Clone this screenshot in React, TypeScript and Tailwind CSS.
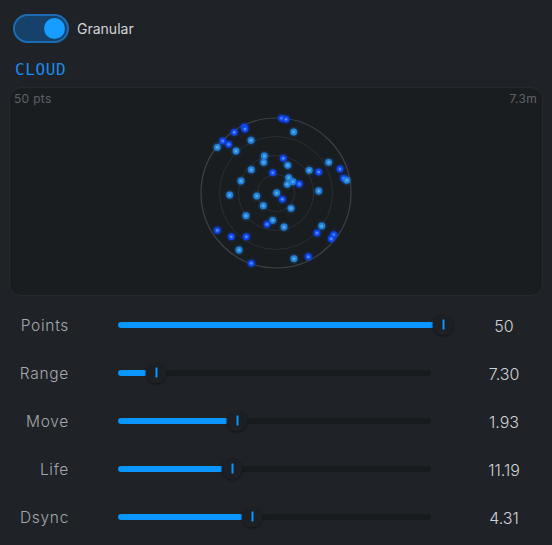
import React from "react";

type Dot = [number, number, 0 | 1];

const DOTS: Dot[] = [
  [280.7, 117.3, 0], [285, 118.3, 0], [243.3, 126, 0], [244, 128, 0], [233.3, 131.3, 0],
  [292.7, 131, 1], [221.7, 140, 0], [227.7, 143.3, 0], [216.3, 146.3, 1], [250, 139.3, 1],
  [235, 150, 1], [263.3, 155, 1], [262.7, 161.3, 1], [282.3, 157.3, 0], [286.7, 164.3, 1],
  [250.3, 168.7, 1], [271.7, 171.7, 0], [308.3, 169.3, 1], [317.7, 171, 0], [327.7, 161.3, 1],
  [339, 168, 0], [342.7, 177.3, 0], [345.7, 179.3, 1], [240, 180, 1], [287.7, 176.7, 1],
  [292, 180.7, 1], [286.3, 183.3, 1], [298.3, 183, 0], [317.7, 190, 1], [228.7, 194, 1],
  [275.7, 192, 1], [255.7, 195, 1], [281.3, 198.3, 0], [262.3, 204.7, 1], [290, 207.3, 1],
  [245, 214.7, 1], [271.7, 219.3, 1], [266, 223.3, 0], [283, 226, 1], [320.7, 225, 1],
  [316, 232, 0], [332.7, 233.7, 0], [330.3, 237.7, 0], [216.3, 229.3, 0], [230.3, 235.7, 0],
  [245.3, 235.7, 0], [238, 249, 1], [250.3, 262.3, 0], [293, 257.7, 1], [307.3, 255.7, 0],
];

const SLIDERS = [
  { label: "Points", thumb: 443, value: "50" },
  { label: "Range", thumb: 156, value: "7.30" },
  { label: "Move", thumb: 237, value: "1.93" },
  { label: "Life", thumb: 232, value: "11.19" },
  { label: "Dsync", thumb: 252, value: "4.31" },
];

const TRACK_LEFT = 118;

function Slider({ thumb }: { thumb: number }) {
  const t = thumb - TRACK_LEFT;
  return (
    <div className="relative w-[313px] h-[6px] rounded-full bg-[#181b1e]">
      <div
        className="absolute left-0 top-0 h-[6px] rounded-full bg-[#0a95ff]"
        style={{ width: t - 9 }}
      />
      <div
        className="absolute top-1/2 w-[21px] h-[21px] -translate-x-1/2 -translate-y-1/2 rounded-full bg-[#1c1f23] shadow-[0_1px_2px_rgba(0,0,0,0.35)] flex items-center justify-center"
        style={{ left: t }}
      >
        <div className="w-[2px] h-[10px] bg-[#0a95ff] -translate-y-[1px]" />
      </div>
    </div>
  );
}

export default function App() {
  const cx = 266;
  const cy = 105;
  return (
    <div
      className="w-[552px] h-[545px] bg-[#1f2226] px-[9px] pt-[14px] overflow-hidden"
      style={{ fontFamily: "Inter, 'Noto Sans', sans-serif" }}
    >
      {/* toggle row */}
      <div className="flex items-center h-[29px] pl-[4px] gap-[8px]">
        <div className="w-[56px] h-[29px] rounded-full border-2 border-[#1d6cb3] bg-[#16416b] flex items-center justify-end pr-[2px]">
          <div className="w-[21px] h-[21px] rounded-full bg-[#179dff]" />
        </div>
        <span className="text-[14px] text-[#d3d6da]">Granular</span>
      </div>

      {/* CLOUD title */}
      <div
        className="mt-[17px] ml-[6px] h-[20px] leading-[20px] text-[16px] text-[#1a8cf0] tracking-[0.6px]"
        style={{ fontFamily: "'DejaVu Sans Mono', 'Liberation Mono', monospace" }}
      >
        CLOUD
      </div>

      {/* cloud panel */}
      <div className="relative mt-[7px] h-[209px] rounded-[12px] border border-[#262a2f] bg-[#1a1d20]">
        <svg className="absolute inset-0" width="532" height="209" viewBox="0 0 532 209">
          <defs>
            <filter id="glow" x="-50%" y="-50%" width="200%" height="200%">
              <feGaussianBlur stdDeviation="0.8" />
            </filter>
          </defs>
          <circle cx={cx} cy={cy} r={75} fill="none" stroke="#3c414a" strokeWidth="1.2" />
          <circle cx={cx} cy={cy} r={56.5} fill="none" stroke="#2a2e34" strokeWidth="1" />
          <circle cx={cx} cy={cy} r={37.5} fill="none" stroke="#2a2e34" strokeWidth="1" />
          <circle cx={cx} cy={cy} r={18.5} fill="none" stroke="#2a2e34" strokeWidth="1" />
          <line x1={cx - 4} y1={cy} x2={cx + 4} y2={cy} stroke="#3a3f48" strokeWidth="1" />
          <line x1={cx} y1={cy - 4} x2={cx} y2={cy + 4} stroke="#3a3f48" strokeWidth="1" />
          {DOTS.map(([x, y, c], i) => {
            const px = x - 9;
            const py = y - 87;
            const outer = c === 0 ? "#0d45ef" : "#1f82dc";
            const inner = c === 0 ? "#4f86ff" : "#5aa6e6";
            return (
              <g key={i}>
                <circle cx={px} cy={py} r={4.2} fill={outer} opacity={0.45} filter="url(#glow)" />
                <circle cx={px} cy={py} r={3.4} fill={outer} />
                <circle cx={px} cy={py} r={1.5} fill={inner} />
              </g>
            );
          })}
        </svg>
        <div className="relative flex justify-between pl-[4px] pr-[5px] pt-[3px] text-[12px] leading-[16px] text-[#5d6268] tracking-[0.3px]">
          <span>50 pts</span>
          <span>7.3m</span>
        </div>
      </div>

      {/* sliders */}
      <div className="mt-[5px] flex flex-col">
        {SLIDERS.map((s) => (
          <div key={s.label} className="flex items-center h-[48px]">
            <div className="w-[60px] text-right text-[15.5px] font-light tracking-[0.7px] text-[#a4a8ad] pt-[2px]">
              {s.label}
            </div>
            <div className="ml-[49px]">
              <Slider thumb={s.thumb} />
            </div>
            <div className="ml-[43px] w-[60px] text-center text-[16px] font-light text-[#cfd3d7] pt-[2px]">
              {s.value}
            </div>
          </div>
        ))}
      </div>
    </div>
  );
}
